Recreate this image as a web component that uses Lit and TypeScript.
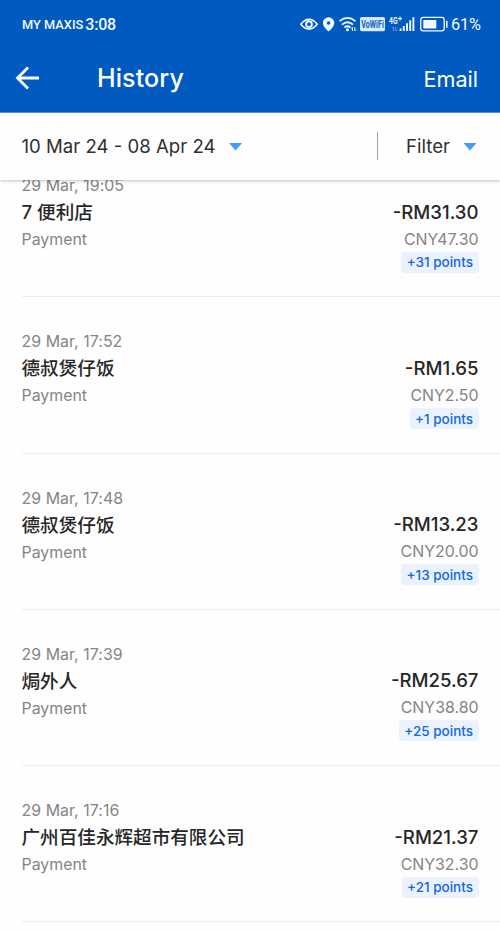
import { LitElement, html, css } from "lit";
import { customElement, property } from "lit/decorators.js";

interface Transaction {
  date: string;
  name: string;
  amount: string;
  foreign: string;
  points: string;
}

const transactions: Transaction[] = [
  { date: "29 Mar, 19:05", name: "7 便利店", amount: "-RM31.30", foreign: "CNY47.30", points: "+31 points" },
  { date: "29 Mar, 17:52", name: "德叔煲仔饭", amount: "-RM1.65", foreign: "CNY2.50", points: "+1 points" },
  { date: "29 Mar, 17:48", name: "德叔煲仔饭", amount: "-RM13.23", foreign: "CNY20.00", points: "+13 points" },
  { date: "29 Mar, 17:39", name: "焗外人", amount: "-RM25.67", foreign: "CNY38.80", points: "+25 points" },
  { date: "29 Mar, 17:16", name: "广州百佳永辉超市有限公司", amount: "-RM21.37", foreign: "CNY32.30", points: "+21 points" },
];

@customElement("status-bar")
class StatusBar extends LitElement {
  static styles = css`
    :host { display: flex; align-items: center; height: 48px; padding: 0 19px 0 22px; color: #f3f9ff; font-family: Roboto, sans-serif; }
    .carrier { font-size: 12.8px; font-weight: 500; letter-spacing: 0; margin-top: 1px; }
    .time { font-size: 16px; font-weight: 500; margin-left: 2px; flex: 1; letter-spacing: -0.2px; }
    svg { display: block; flex: none; }
    .battery { font-size: 16.3px; margin-left: 3px; width: 30px; white-space: nowrap; letter-spacing: -0.1px; }
    .vowifi { font: 700 10px Roboto, sans-serif; }
    .net { font: 700 9px Roboto, sans-serif; }
  `;
  render() {
    return html`
      <span class="carrier">MY MAXIS</span><span class="time">3:08</span>
      <svg width="148" height="24" viewBox="300 12 148 24" fill="none" stroke="#f3f9ff">
        <path d="M300.8 24.2Q309 14.4 317.2 24.2Q309 34 300.8 24.2Z" stroke-width="1.6" />
        <circle cx="309" cy="24.2" r="2.9" stroke-width="1.9" />
        <path fill-rule="evenodd" d="M328.6 17.3a5.7 5.7 0 0 0-5.7 5.7c0 4 5.7 8.4 5.7 8.4s5.7-4.4 5.7-8.4a5.7 5.7 0 0 0-5.7-5.7Zm0 3.9a1.8 1.8 0 1 1 0 3.6a1.8 1.8 0 0 1 0-3.6Z" fill="#f3f9ff" stroke="none" />
        <path d="M339.6 21.2Q347.5 14.7 355.4 21.2M342 24.6Q347.5 19.9 353 24.6M344.5 27.5Q347.5 25 350.5 27.5" stroke-width="1.7" />
        <circle cx="347.5" cy="29.7" r="1.5" fill="#f3f9ff" stroke="none" />
        <path d="M352.4 31v-3.6M351.2 28.6l1.2-1.2M354.8 27.2v3.6M356 29.6l-1.2 1.2" stroke-width="1" />
        <rect x="360" y="17" width="25" height="14.3" rx="1.8" fill="#d7e8fb" stroke="none" />
        <text class="vowifi" x="361.3" y="27.8" fill="#1261b8" stroke="none" textLength="22.5" lengthAdjust="spacingAndGlyphs">VoWiFi</text>
        <text class="net" x="389" y="23.6" fill="#f3f9ff" stroke="none" textLength="8.5" lengthAdjust="spacingAndGlyphs">4G</text>
        <path d="M398 18.6h4M400 16.6v4" stroke-width="1.1" />
        <path d="M393.4 31v-4M395.8 27v4M392.4 28l1-1M396.8 30l-1 1" stroke="#7baae0" stroke-width="0.8" />
        <path d="M400.6 31v-2.5M403.8 31v-5M407 31v-7.8M410.2 31v-10.8M413.4 31v-13.8" stroke-width="1.9" />
        <rect x="420.8" y="17.4" width="23.4" height="13.4" rx="2.4" stroke-width="1.3" />
        <rect x="423.3" y="19.9" width="13" height="8.5" rx=".5" fill="#f3f9ff" stroke="none" />
        <path d="M446.8 20.8v7" stroke-width="1.5" />
      </svg>
      <span class="battery">61%</span>
    `;
  }
}

@customElement("transaction-row")
class TransactionRow extends LitElement {
  @property({ attribute: false }) item!: Transaction;
  static styles = css`
    :host { display: block; flex: none; height: 156.2px; white-space: nowrap; }
    .row { display: flex; justify-content: space-between; box-sizing: border-box; height: 100%;
      margin-left: 21.5px; padding: 34px 21.5px 0 0; border-bottom: 1px solid #ededed; }
    .left, .right { display: flex; flex-direction: column; }
    .right { align-items: flex-end; padding-top: 21.7px; }
    .date, .kind, .foreign { font-size: 15.9px; line-height: 22px; color: #858585; }
    .date { letter-spacing: 0.05px; }
    .name, .amount { font-size: 18.6px; line-height: 30px; height: 32px; color: #262626; font-weight: 500; }
    .points { display: flex; align-items: center; height: 21px; margin-top: 1px; padding: 0 5.5px; border-radius: 4px;
      background: #ebf2fd; color: #0f69e2; font-size: 13.5px; font-weight: 500; }
  `;
  render() {
    const t = this.item;
    return html`<div class="row">
      <div class="left"><span class="date">${t.date}</span><span class="name">${t.name}</span><span class="kind">Payment</span></div>
      <div class="right"><span class="amount">${t.amount}</span><span class="foreign">${t.foreign}</span><span class="points">${t.points}</span></div>
    </div>`;
  }
}

@customElement("app-root")
class AppRoot extends LitElement {
  static styles = css`
    :host { display: flex; flex-direction: column; width: 100%; height: 930px; overflow: hidden; background: #fefefe;
      font-family: Inter, "Noto Sans CJK SC", sans-serif; }
    header { flex: none; height: 113px; background: #005abf; color: #fff; border-bottom: 1px solid #5a94d6; box-sizing: border-box; }
    .title-bar { display: flex; align-items: center; height: 60px; padding: 0 22px 0 15px; }
    h1 { flex: 1; margin: 0 0 0 57px; font-size: 25px; font-weight: 500; line-height: 30px; letter-spacing: 0.1px; }
    .email { font-size: 21.6px; margin-top: 2px; }
    .filters { flex: none; display: flex; align-items: center; height: 67px; box-sizing: border-box; padding: 0 23px 1px 21.5px;
      background: #fefefe; box-shadow: 0 1px 3px rgba(0, 0, 0, 0.24); z-index: 1; color: #303030; font-size: 18.6px; white-space: nowrap; }
    .arrow { width: 14px; height: 8px; background: #459cf8; clip-path: polygon(0 0, 100% 0, 50% 100%); margin-left: 13px; margin-top: 1px; }
    .divider { width: 1px; height: 28px; background: #a4a4a4; margin: 0 28px 0 auto; }
    .list { flex: 1; min-height: 0; display: flex; flex-direction: column; overflow: hidden; }
    .list > :first-child { margin-top: -38.8px; }
  `;
  render() {
    return html`
      <header>
        <status-bar></status-bar>
        <div class="title-bar">
          <svg width="25" height="24" viewBox="0 0 25 24" fill="none" stroke="#fff" stroke-width="2.8"><path d="M24 12H3M13 1.5L2.5 12L13 22.5" /></svg>
          <h1>History</h1><span class="email">Email</span>
        </div>
      </header>
      <div class="filters">
        <span>10 Mar 24 - 08 Apr 24</span><i class="arrow"></i>
        <i class="divider"></i><span>Filter</span><i class="arrow"></i>
      </div>
      <div class="list">${transactions.map((t) => html`<transaction-row .item=${t}></transaction-row>`)}</div>
    `;
  }
}
